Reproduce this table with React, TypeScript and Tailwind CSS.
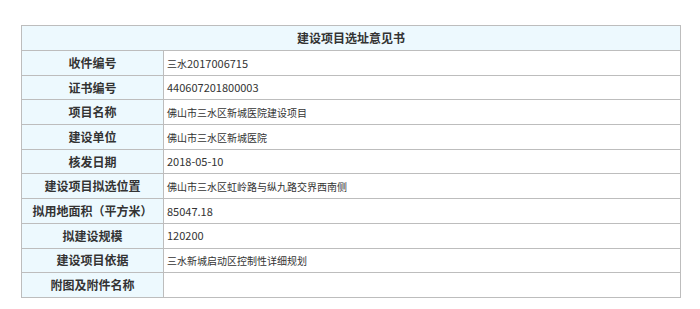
const rows: [string, string][] = [
  ["收件编号", "三水2017006715"],
  ["证书编号", "440607201800003"],
  ["项目名称", "佛山市三水区新城医院建设项目"],
  ["建设单位", "佛山市三水区新城医院"],
  ["核发日期", "2018-05-10"],
  ["建设项目拟选位置", "佛山市三水区虹岭路与纵九路交界西南侧"],
  ["拟用地面积（平方米）", "85047.18"],
  ["拟建设规模", "120200"],
  ["建设项目依据", "三水新城启动区控制性详细规划"],
  ["附图及附件名称", ""],
];

// CJK glyphs in the source are a touch smaller than the digits
function Value({ text }: { text: string }) {
  const parts = text.match(/[\u4e00-\u9fff]+|[^\u4e00-\u9fff]+/g) ?? [];
  return (
    <>
      {parts.map((p, i) =>
        /[\u4e00-\u9fff]/.test(p) ? (
          <span key={i} className="text-[10px]">
            {p}
          </span>
        ) : (
          <span key={i}>{p}</span>
        )
      )}
    </>
  );
}

export default function App() {
  return (
    <div
      className="w-[700px] h-[309px] bg-white pt-[25px] pl-[21px]"
      style={{ fontFamily: '"Microsoft YaHei", "Noto Sans CJK SC", sans-serif' }}
    >
      <table className="w-[660px] border-collapse text-[#333]">
        <tbody>
          <tr className="h-[25px]">
            <td
              colSpan={2}
              className="border border-[#bdbdbd] bg-[#edf9fe] text-center text-[12px] font-bold"
            >
              建设项目选址意见书
            </td>
          </tr>
          {rows.map(([label, value]) => (
            <tr key={label} className="h-[24.7px]">
              <td className="w-[142px] border border-[#bdbdbd] bg-[#edf9fe] text-center text-[12px] font-bold">
                {label}
              </td>
              <td className="border border-[#bdbdbd] pl-[3px] text-[11px]">
                <Value text={value} />
              </td>
            </tr>
          ))}
        </tbody>
      </table>
    </div>
  );
}
